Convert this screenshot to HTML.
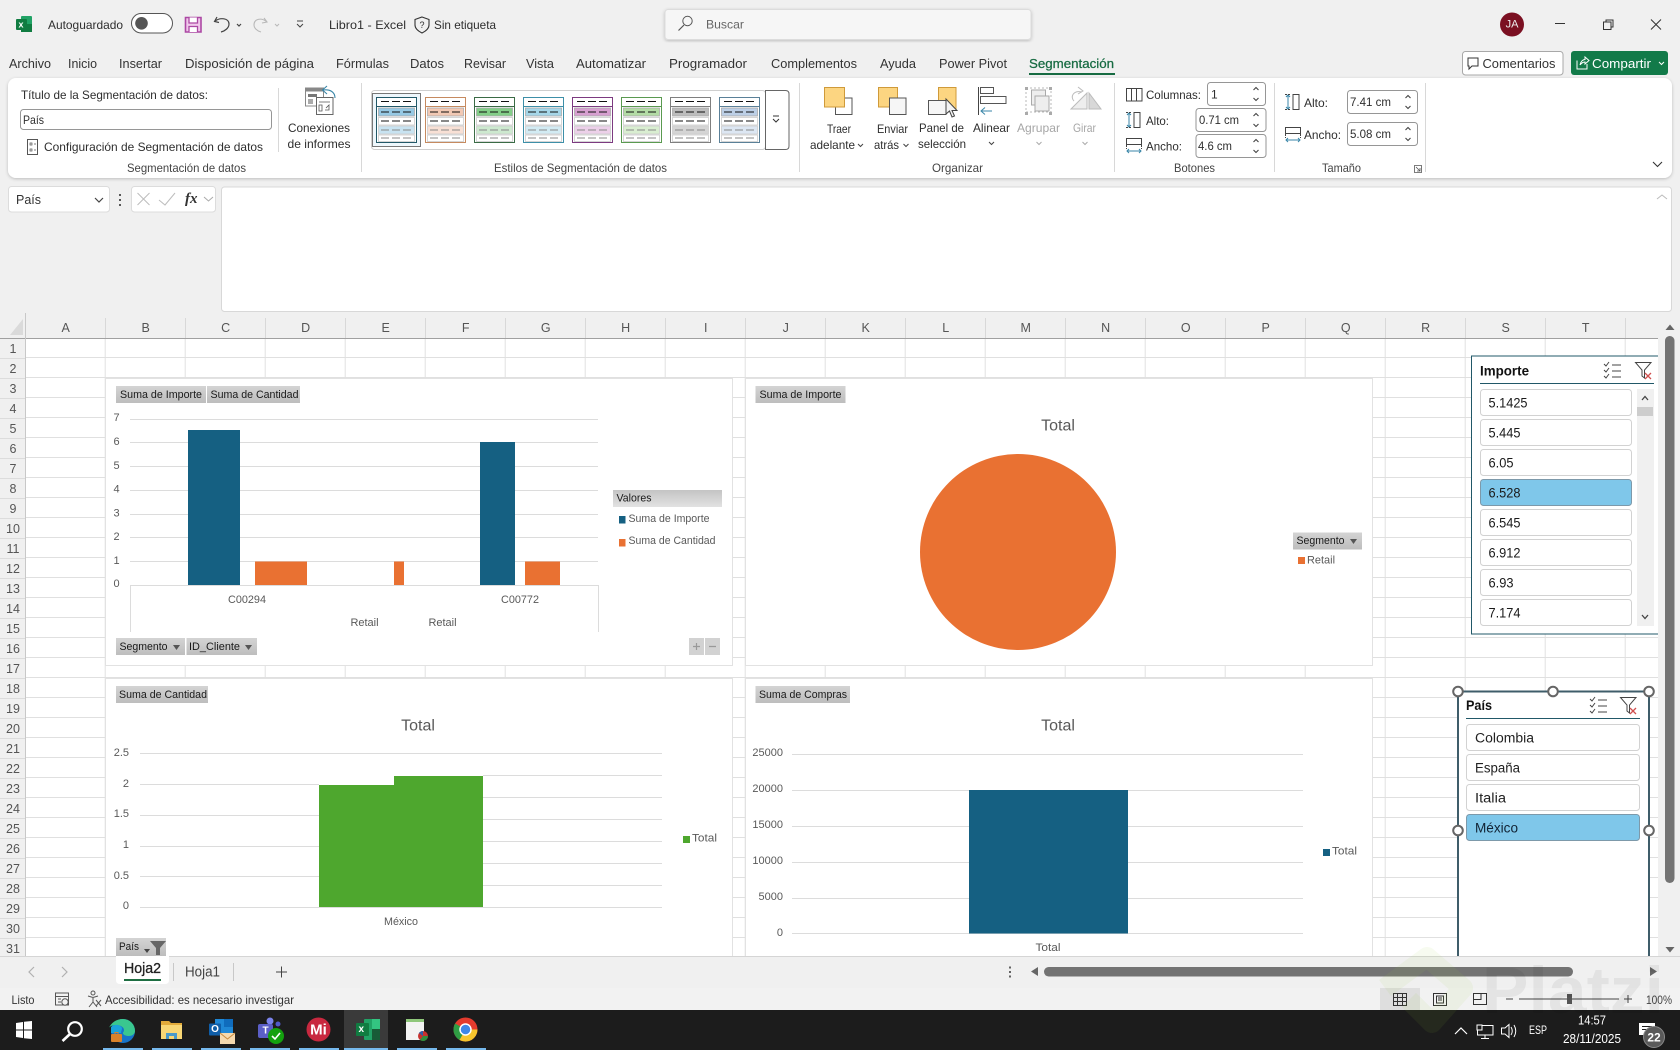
<!DOCTYPE html>
<html lang="es">
<head>
<meta charset="utf-8">
<title>Libro1 - Excel</title>
<style>
html,body{margin:0;padding:0;background:#f0f0f0;width:1680px;height:1050px;overflow:hidden}
svg{display:block}
text{font-family:"Liberation Sans",sans-serif;font-size:12px;fill:#2e2e2e;dominant-baseline:central}
.t{font-size:13px;fill:#333}
.h{font-size:12.5px;fill:#555;text-anchor:middle}
.lb{font-size:12px;fill:#444}
.dis{fill:#a6a6a6}
.c{text-anchor:middle}
.ch{font-size:11px;fill:#595959}
.fb{font-size:11px;fill:#1a1a1a}
.ti{font-size:16px;fill:#595959;text-anchor:middle}
.s{font-size:13.5px;fill:#1a1a1a}
.st{font-size:14px;font-weight:bold;fill:#111}
.i{fill:none;stroke:#444;stroke-width:1}
.d{fill:none;stroke:#444;stroke-width:1.2}
.ta{fill:#fff;stroke:var(--a)}
.tb{fill:var(--b);stroke:#aaa;stroke-width:.8}
.tc{fill:var(--c);stroke:#ccc;stroke-width:.8}
.tw{fill:#fff;stroke:#ccc;stroke-width:.8}
.dk{stroke:#111;stroke-dasharray:8 3;stroke-width:1;fill:none}
.dg{stroke:#888;stroke-dasharray:8 3;stroke-width:1;fill:none}
.gl{stroke:#dcdcdc;stroke-width:1}
.it{fill:#fff;stroke:#d2d2d2}
.sel{fill:#7fc7ea;stroke:#7d99aa}
.inp{fill:#fff;stroke:#969696}
</style>
</head>
<body>
<svg xmlns="http://www.w3.org/2000/svg" width="1680" height="1050" viewBox="0 0 1680 1050">
<defs>
<filter id="sh" x="-2%" y="-10%" width="104%" height="120%"><feDropShadow dx="0" dy="1" stdDeviation="1.5" flood-color="#000" flood-opacity=".22"/></filter>
<pattern id="grid" x="25.7" y="338" width="80" height="20" patternUnits="userSpaceOnUse">
<rect width="80" height="20" fill="#fff"/><path d="M79.5 0V20M0 19.5H80" stroke="#e0e0e0" fill="none"/>
</pattern>
<linearGradient id="btn" x1="0" y1="0" x2="0" y2="1"><stop offset="0" stop-color="#d4d4d4"/><stop offset="1" stop-color="#bdbdbd"/></linearGradient>
<linearGradient id="btn2" x1="0" y1="0" x2="0" y2="1"><stop offset="0" stop-color="#c4c4c4"/><stop offset="1" stop-color="#e2e2e2"/></linearGradient>
<g id="th">
<rect class="ta" x=".5" y=".5" width="40" height="45"/>
<path d="M0 9.500H41" style="stroke:var(--a)"/>
<path class="dk" d="M5 4.500H36"/>
<rect class="tb" x="2.500" y="11" width="36" height="8"/><path class="dk" d="M5 15H36"/>
<rect class="tw" x="2.500" y="20.500" width="36" height="7.500"/><path class="dk" d="M5 24H36"/>
<rect class="tc" x="2.500" y="29" width="36" height="8"/><path class="dg" d="M5 33H36"/>
<rect class="tw" x="2.500" y="38" width="36" height="6.500"/><path class="dg" d="M5 41H36"/>
</g>
<g id="spin"><path d="M-2.500 -4L0 -6.500L2.500 -4M-2.500 4L0 6.500L2.500 4" fill="none" stroke="#444" stroke-width="1.100"/></g>
<g id="multi"><path d="M0 2l2 2 3-4M0 8l2 2 3-4M0 14l2 2 3-4" fill="none" stroke="#444"/><path d="M8 3H17M8 9H17M8 15H17" stroke="#444"/></g>
<g id="fx"><path d="M.5 .5H16L9.500 8V16L7 14V8Z" fill="#fff" stroke="#444"/><path d="M10 11l6 6M16 11l-6 6" stroke="#d0504f" stroke-width="1.300"/></g>
<g id="alt"><rect x="8" y=".5" width="6" height="15" fill="#fff" stroke="#444"/><path d="M3 1V15M1 3L3 1L5 3M1 13L3 15L5 13" fill="none" stroke="#3a86a8"/><path d="M0 .5H6M0 15.500H6" stroke="#444" stroke-dasharray="2 1"/></g>
<g id="anc"><rect x=".5" y=".5" width="15" height="6" fill="#fff" stroke="#444"/><path d="M1 13H15M3 11L1 13L3 15M13 11L15 13L13 15" fill="none" stroke="#3a86a8"/><path d="M.5 7V11M15.500 7V11" stroke="#444" stroke-dasharray="2 1"/></g>
</defs>

<rect width="1680" height="1050" fill="#f0f0f0"/>

<!-- title bar -->
<rect x="21" y="16" width="11" height="16" rx="1" fill="#21a366"/><rect x="21" y="24" width="11" height="8" fill="#107c41"/><rect x="16" y="19" width="11" height="11" rx="1" fill="#107c41"/>
<text x="18.500" y="24.500" style="font-size:9px;font-weight:bold;fill:#fff">x</text>
<text x="48" y="25" textLength="75" lengthAdjust="spacingAndGlyphs">Autoguardado</text>
<rect x="131.500" y="13.500" width="41" height="19.500" rx="9.700" fill="#fff" stroke="#555"/><circle cx="141.500" cy="23.300" r="6.300" fill="#555"/>
<path d="M185.500 17.500H201V32H185.500Z" fill="#f0c8eb" stroke="#ac48a4" stroke-width="1.600"/><path d="M189 17.500V23H197.500V17.500" fill="#fff" stroke="#ac48a4" stroke-width="1.300"/><path d="M189 32V26.500H197.500V32" fill="#fff" stroke="#ac48a4" stroke-width="1.300"/>
<path d="M217 17L214.500 21.500L219 22.500M214.500 21.500C220 17 229 18 229 24C229 28 225 31 221 32" fill="none" stroke="#444" stroke-width="1.200"/>
<path class="d" d="M237 24L239 26L241 24"/>
<path d="M264 18L267 22L262 23M267 22C261 17 254 19 254 25C254 28 257 31 261 32" fill="none" stroke="#b8b8b8" stroke-width="1.100"/>
<path d="M275 24L277 26L279 24" fill="none" stroke="#b8b8b8"/>
<path d="M297 21H303M297 24L300 27L303 24" fill="none" stroke="#444"/>
<text x="329" y="25" textLength="77" lengthAdjust="spacingAndGlyphs">Libro1  -  Excel</text>
<path d="M422 17L429 19.500V25C429 29 425 31.500 422 33C419 31.500 415 29 415 25V19.500Z" fill="none" stroke="#333" stroke-width="1.100"/>
<text x="419.500" y="25" style="font-size:9px">?</text>
<text x="434" y="25" textLength="62" lengthAdjust="spacingAndGlyphs">Sin etiqueta</text>
<rect x="665" y="9.500" width="366" height="30" rx="3" fill="#f6f6f6" stroke="#dcdcdc" filter="url(#sh)"/>
<circle cx="687.500" cy="21" r="4.700" fill="none" stroke="#555"/><path d="M684 25L678.500 30.500" stroke="#555" stroke-width="1.200"/>
<text x="706" y="24.500" textLength="38" lengthAdjust="spacingAndGlyphs" style="fill:#666">Buscar</text>
<circle cx="1512" cy="24.500" r="12" fill="#7b1022"/><text x="1512" y="24.500" class="c" style="font-size:11px;fill:#eee">JA</text>
<path d="M1555 23.500H1565" stroke="#333"/>
<path d="M1603.500 22H1611V29.500H1603.500ZM1606 22V20H1613V27H1611" fill="none" stroke="#333"/>
<path d="M1651 19.500L1661 29.500M1661 19.500L1651 29.500" stroke="#333"/>

<!-- tabs -->
<text class="t" x="9" y="63.500" textLength="42" lengthAdjust="spacingAndGlyphs">Archivo</text>
<text class="t" x="68" y="63.500" textLength="29" lengthAdjust="spacingAndGlyphs">Inicio</text>
<text class="t" x="119" y="63.500" textLength="43" lengthAdjust="spacingAndGlyphs">Insertar</text>
<text class="t" x="185" y="63.500" textLength="129" lengthAdjust="spacingAndGlyphs">Disposición de página</text>
<text class="t" x="336" y="63.500" textLength="53" lengthAdjust="spacingAndGlyphs">Fórmulas</text>
<text class="t" x="410" y="63.500" textLength="34" lengthAdjust="spacingAndGlyphs">Datos</text>
<text class="t" x="464" y="63.500" textLength="42" lengthAdjust="spacingAndGlyphs">Revisar</text>
<text class="t" x="526" y="63.500" textLength="28" lengthAdjust="spacingAndGlyphs">Vista</text>
<text class="t" x="576" y="63.500" textLength="70" lengthAdjust="spacingAndGlyphs">Automatizar</text>
<text class="t" x="669" y="63.500" textLength="78" lengthAdjust="spacingAndGlyphs">Programador</text>
<text class="t" x="771" y="63.500" textLength="86" lengthAdjust="spacingAndGlyphs">Complementos</text>
<text class="t" x="880" y="63.500" textLength="36" lengthAdjust="spacingAndGlyphs">Ayuda</text>
<text class="t" x="939" y="63.500" textLength="68" lengthAdjust="spacingAndGlyphs">Power Pivot</text>
<text class="t" x="1029" y="63.500" textLength="85" lengthAdjust="spacingAndGlyphs" style="fill:#176b42;stroke:#176b42;stroke-width:.25">Segmentación</text>
<rect x="1029" y="73" width="86" height="2" fill="#176b42"/>
<rect x="1462.500" y="51.500" width="100.500" height="23.500" rx="3" fill="#fff" stroke="#a8a8a8"/>
<path d="M1468 58H1478V66H1472L1469 69V66H1468Z" fill="none" stroke="#333"/>
<text class="t" x="1482.500" y="63.500" textLength="73" lengthAdjust="spacingAndGlyphs">Comentarios</text>
<rect x="1571" y="51" width="97" height="24" rx="3" fill="#127a49"/>
<path d="M1577 60.500V69H1587V64M1580 65C1580.500 61.500 1583 59.500 1585 59.500V57L1589 60.500L1585 64V62C1583 62 1581.500 63 1580 65" fill="none" stroke="#fff"/>
<text class="t" x="1592" y="63.500" textLength="59" lengthAdjust="spacingAndGlyphs" style="fill:#fff">Compartir</text>
<path d="M1659 62L1661.500 64.500L1664 62" fill="none" stroke="#fff"/>

<!-- ribbon -->
<rect x="8" y="78" width="1664" height="100" rx="8" fill="#fff" filter="url(#sh)"/>
<path d="M278.500 88V152M361.500 83V172M799.500 83V172M1114.500 83V172M1274.500 83V172M1425.500 83V172" stroke="#d8d8d8"/>
<text x="21" y="95" textLength="187" lengthAdjust="spacingAndGlyphs">Título de la Segmentación de datos:</text>
<rect class="inp" x="20.500" y="109.500" width="251" height="20" rx="3"/>
<text x="23" y="120" textLength="21" lengthAdjust="spacingAndGlyphs">País</text>
<rect x="27.500" y="139.500" width="10" height="15" fill="#fff" stroke="#555"/><path d="M30 143h2v2h-2zM34 144h2M30 149h2v2h-2zM34 150h2" fill="none" stroke="#555" stroke-width=".7"/>
<text x="44" y="147" textLength="219" lengthAdjust="spacingAndGlyphs">Configuración de Segmentación de datos</text>
<text class="lb" x="127" y="168" textLength="119" lengthAdjust="spacingAndGlyphs">Segmentación de datos</text>
<!-- conexiones -->
<rect x="305.500" y="88" width="18" height="18" fill="#fff" stroke="#888"/><rect x="306" y="88.500" width="17" height="3" fill="#888"/><rect x="308" y="94" width="9" height="3" fill="#777"/><rect x="308" y="99" width="5" height="5" fill="#aaa"/>
<rect x="316.500" y="97.500" width="16.500" height="17" fill="#fff" stroke="#666"/><path d="M319 102H330M319 105H322V111H319ZM326 108L329 105V110H325" fill="none" stroke="#555" stroke-width=".8"/>
<path d="M327 86L322.500 90L327 94M323 90C330 89 335 92 335 98" fill="none" stroke="#3a86a8" stroke-width="1.100"/>
<text x="288" y="128" textLength="62" lengthAdjust="spacingAndGlyphs">Conexiones</text>
<text x="287.500" y="144" textLength="63" lengthAdjust="spacingAndGlyphs">de informes</text>
<!-- gallery -->
<rect x="371.500" y="90.500" width="394" height="59" rx="3" fill="#fff" stroke="#cfcfcf"/>
<rect x="372.500" y="93.500" width="48" height="53" fill="#eef7fc" stroke="#777"/>
<use href="#th" x="376" y="97" style="--a:#215868;--b:#96c9e4;--c:#c8e3f1"/>
<use href="#th" x="425" y="97" style="--a:#c68a5f;--b:#f2c9b4;--c:#f8e0d5"/>
<use href="#th" x="474" y="97" style="--a:#3a6b45;--b:#83cf88;--c:#cde9cf"/>
<use href="#th" x="523" y="97" style="--a:#3d8fa8;--b:#a5d6e8;--c:#d2ebf3"/>
<use href="#th" x="572" y="97" style="--a:#7c3a80;--b:#d79fd0;--c:#ecd0e9"/>
<use href="#th" x="621" y="97" style="--a:#5a9a50;--b:#b3dca5;--c:#d9eed1"/>
<use href="#th" x="670" y="97" style="--a:#7f7f7f;--b:#bcbcbc;--c:#d5d5d5"/>
<use href="#th" x="719" y="97" style="--a:#5a8098;--b:#bccfe6;--c:#dde7f3"/>
<path d="M765.500 90.500H785.500Q789 90.500 789 94V146Q789 149.500 785.500 149.500H765.500Z" fill="#fff" stroke="#666"/>
<path d="M773 116H779M773 119L776 122L779 119" fill="none" stroke="#333"/>
<text class="lb" x="494" y="168" textLength="173" lengthAdjust="spacingAndGlyphs">Estilos de Segmentación de datos</text>
<!-- organizar -->
<rect x="835.500" y="98" width="16.500" height="16.500" fill="#fff" stroke="#555"/><rect x="824.500" y="87.500" width="20" height="19.500" fill="#fcd581" stroke="#cf9a3a"/>
<text x="827" y="129" textLength="24" lengthAdjust="spacingAndGlyphs">Traer</text><text x="810" y="145" textLength="45" lengthAdjust="spacingAndGlyphs">adelante</text><path class="i" d="M858 144L860.500 146.500L863 144"/>
<rect x="878.500" y="87.500" width="19" height="19.500" fill="#fcd581" stroke="#cf9a3a"/>
<rect x="889.500" y="98" width="16.500" height="16.500" fill="#f6f6f6" stroke="#555"/>
<text x="877" y="129" textLength="31" lengthAdjust="spacingAndGlyphs">Enviar</text><text x="874" y="145" textLength="25" lengthAdjust="spacingAndGlyphs">atrás</text><path class="i" d="M903.500 144L906 146.500L908.500 144"/>
<rect x="938.500" y="87.500" width="17.500" height="23" fill="#fcd581" stroke="#cf9a3a"/>
<rect x="928.500" y="100.500" width="17.500" height="14" fill="#f6f6f6" stroke="#555"/>
<path d="M946 99V114L949.500 111L952 117L954.500 116L952 110.500H957Z" fill="#f2f2f2" stroke="#444"/>
<text x="919" y="128" textLength="45" lengthAdjust="spacingAndGlyphs">Panel de</text><text x="918" y="144" textLength="48" lengthAdjust="spacingAndGlyphs">selección</text>
<path d="M978.500 87V115" stroke="#444"/><rect x="980.500" y="87.500" width="13" height="6" fill="#fff" stroke="#555"/><rect x="980.500" y="96.500" width="25.500" height="7" fill="#fff" stroke="#555"/>
<path d="M985 107.500L981 111L985 114.500M981 111H992" fill="none" stroke="#3a86a8"/>
<text x="973" y="128" textLength="37" lengthAdjust="spacingAndGlyphs">Alinear</text><path class="i" d="M989 142L991.500 144.500L994 142"/>
<rect x="1026" y="88" width="25" height="24" fill="none" stroke="#b8b8b8" stroke-dasharray="2 2"/><rect x="1031.500" y="90" width="14" height="15" fill="#eee" stroke="#aaa"/><rect x="1035" y="96" width="14" height="15" fill="#eee" stroke="#aaa"/>
<path d="M1025 87h3v3h-3zM1049 87h3v3h-3zM1025 112h3v3h-3zM1049 112h3v3h-3z" fill="#aaa"/>
<text class="dis" x="1017" y="128" textLength="43" lengthAdjust="spacingAndGlyphs">Agrupar</text><path d="M1036.500 142L1039 144.500L1041.500 142" fill="none" stroke="#aaa"/>
<path d="M1071 109L1087 109V93Z" fill="#eee" stroke="#bbb"/><path d="M1089 93V109H1101Z" fill="#d8d8d8" stroke="#bbb"/><path d="M1082 92C1073 90 1070 97 1074 101M1078 87L1083 91L1078 94" fill="none" stroke="#bbb"/>
<text class="dis" x="1073" y="128" textLength="23" lengthAdjust="spacingAndGlyphs">Girar</text><path d="M1082.500 142L1085 144.500L1087.500 142" fill="none" stroke="#aaa"/>
<text class="lb" x="932" y="168" textLength="51" lengthAdjust="spacingAndGlyphs">Organizar</text>
<!-- botones -->
<rect x="1126.500" y="88.500" width="15.500" height="12.500" fill="#fff" stroke="#444"/><path d="M1131.500 89V101M1136.500 89V101" stroke="#444"/>
<text x="1146" y="95" textLength="55" lengthAdjust="spacingAndGlyphs">Columnas:</text>
<rect class="inp" x="1207.500" y="82.500" width="58" height="23" rx="3"/><text x="1211" y="94.500">1</text><use href="#spin" x="1256" y="94"/>
<use href="#alt" x="1126" y="112"/><text x="1146" y="121" textLength="23" lengthAdjust="spacingAndGlyphs">Alto:</text>
<rect class="inp" x="1196" y="108.500" width="70" height="23" rx="3"/><text x="1199" y="120" textLength="40" lengthAdjust="spacingAndGlyphs">0.71 cm</text><use href="#spin" x="1256" y="120"/>
<use href="#anc" x="1126" y="138"/><text x="1146" y="146.500" textLength="36" lengthAdjust="spacingAndGlyphs">Ancho:</text>
<rect class="inp" x="1196" y="134.500" width="70" height="23" rx="3"/><text x="1198" y="146" textLength="34" lengthAdjust="spacingAndGlyphs">4.6 cm</text><use href="#spin" x="1256" y="146"/>
<text class="lb" x="1174" y="168" textLength="41" lengthAdjust="spacingAndGlyphs">Botones</text>
<!-- tamano -->
<use href="#alt" x="1285" y="94"/><text x="1304" y="103" textLength="24" lengthAdjust="spacingAndGlyphs">Alto:</text>
<rect class="inp" x="1347.500" y="90.500" width="70" height="23" rx="3"/><text x="1350" y="102" textLength="41" lengthAdjust="spacingAndGlyphs">7.41 cm</text><use href="#spin" x="1408" y="102"/>
<use href="#anc" x="1285" y="127"/><text x="1304" y="135" textLength="37" lengthAdjust="spacingAndGlyphs">Ancho:</text>
<rect class="inp" x="1347.500" y="122.500" width="70" height="23" rx="3"/><text x="1350" y="134" textLength="41" lengthAdjust="spacingAndGlyphs">5.08 cm</text><use href="#spin" x="1408" y="134"/>
<text class="lb" x="1322" y="168" textLength="39" lengthAdjust="spacingAndGlyphs">Tamaño</text>
<path d="M1414.500 165.500H1421.500V172.500H1414.500ZM1416 167L1420 171M1420 168V171H1417" fill="none" stroke="#555" stroke-width=".8"/>
<path d="M1653 162L1657.500 166.500L1662 162" fill="none" stroke="#333" stroke-width="1.100"/>

<!-- formula bar -->
<rect x="8.500" y="186.500" width="101" height="25.500" rx="3" fill="#fff" stroke="#dcdcdc"/>
<text x="16" y="199.500" class="t" textLength="25" lengthAdjust="spacingAndGlyphs">País</text><path d="M95 198L99 202L103 198" fill="none" stroke="#444" stroke-width="1.200"/>
<path d="M120 194v2M120 199v2M120 204v2" stroke="#333" stroke-width="1.600"/>
<rect x="131.500" y="186.500" width="84" height="25.500" rx="3" fill="#fff" stroke="#dcdcdc"/>
<path d="M137.500 193L149.500 205M149.500 193L137.500 205" stroke="#bdbdbd"/><path d="M159 200L165 205L175 193" fill="none" stroke="#bdbdbd"/>
<text x="185" y="199" style="font-family:'Liberation Serif',serif;font-style:italic;font-weight:bold;font-size:15px;fill:#333">fx</text>
<path d="M204 197L208.500 201L213 197" fill="none" stroke="#aaa"/>
<rect x="221.500" y="187" width="1450" height="124.500" rx="3" fill="#fff" stroke="#d8d8d8"/>
<path d="M1657 199L1662 195L1667 199" fill="none" stroke="#bbb"/>

<!-- sheet -->
<rect x="0" y="313" width="1658" height="25.500" fill="#f0f0f0"/>
<rect x="26" y="338.500" width="1632" height="618" fill="url(#grid)"/>
<path d="M10 335L23 335L23 319Z" fill="#dadada"/>
<path d="M0 338.500H1658" stroke="#a0a0a0"/>
<path d="M25.500 313V956" stroke="#c8c8c8"/>
<path d="M105.500 318V338M185.500 318V338M265.500 318V338M345.500 318V338M425.500 318V338M505.500 318V338M585.500 318V338M665.500 318V338M745.500 318V338M825.500 318V338M905.500 318V338M985.500 318V338M1065.500 318V338M1145.500 318V338M1225.500 318V338M1305.500 318V338M1385.500 318V338M1465.500 318V338M1545.500 318V338M1625.500 318V338" stroke="#d8d8d8"/>
<path d="M0 358.500H25M0 378.500H25M0 398.500H25M0 418.500H25M0 438.500H25M0 458.500H25M0 478.500H25M0 498.500H25M0 518.500H25M0 538.500H25M0 558.500H25M0 578.500H25M0 598.500H25M0 618.500H25M0 638.500H25M0 658.500H25M0 678.500H25M0 698.500H25M0 718.500H25M0 738.500H25M0 758.500H25M0 778.500H25M0 798.500H25M0 818.500H25M0 838.500H25M0 858.500H25M0 878.500H25M0 898.500H25M0 918.500H25M0 938.500H25" stroke="#dcdcdc"/>
<text class="h" x="65.700" y="328">A</text><text class="h" x="145.700" y="328">B</text><text class="h" x="225.700" y="328">C</text><text class="h" x="305.700" y="328">D</text><text class="h" x="385.700" y="328">E</text><text class="h" x="465.700" y="328">F</text><text class="h" x="545.700" y="328">G</text><text class="h" x="625.700" y="328">H</text><text class="h" x="705.700" y="328">I</text><text class="h" x="785.700" y="328">J</text><text class="h" x="865.700" y="328">K</text><text class="h" x="945.700" y="328">L</text><text class="h" x="1025.700" y="328">M</text><text class="h" x="1105.700" y="328">N</text><text class="h" x="1185.700" y="328">O</text><text class="h" x="1265.700" y="328">P</text><text class="h" x="1345.700" y="328">Q</text><text class="h" x="1425.700" y="328">R</text><text class="h" x="1505.700" y="328">S</text><text class="h" x="1585.700" y="328">T</text>
<text class="h" x="13" y="349">1</text><text class="h" x="13" y="369">2</text><text class="h" x="13" y="389">3</text><text class="h" x="13" y="409">4</text><text class="h" x="13" y="429">5</text><text class="h" x="13" y="449">6</text><text class="h" x="13" y="469">7</text><text class="h" x="13" y="489">8</text><text class="h" x="13" y="509">9</text><text class="h" x="13" y="529">10</text><text class="h" x="13" y="549">11</text><text class="h" x="13" y="569">12</text><text class="h" x="13" y="589">13</text><text class="h" x="13" y="609">14</text><text class="h" x="13" y="629">15</text><text class="h" x="13" y="649">16</text><text class="h" x="13" y="669">17</text><text class="h" x="13" y="689">18</text><text class="h" x="13" y="709">19</text><text class="h" x="13" y="729">20</text><text class="h" x="13" y="749">21</text><text class="h" x="13" y="769">22</text><text class="h" x="13" y="789">23</text><text class="h" x="13" y="809">24</text><text class="h" x="13" y="829">25</text><text class="h" x="13" y="849">26</text><text class="h" x="13" y="869">27</text><text class="h" x="13" y="889">28</text><text class="h" x="13" y="909">29</text><text class="h" x="13" y="929">30</text><text class="h" x="13" y="949">31</text>

<!-- chart 1 -->
<rect x="105.500" y="378.500" width="627" height="287" fill="#fff" stroke="#e2e2e2"/>
<rect x="116" y="386" width="90" height="17" fill="url(#btn)"/><text class="fb" x="120" y="395" textLength="82" lengthAdjust="spacingAndGlyphs">Suma de Importe</text>
<rect x="207" y="386" width="93" height="17" fill="url(#btn)"/><text class="fb" x="210.500" y="395" textLength="88" lengthAdjust="spacingAndGlyphs">Suma de Cantidad</text>
<path class="gl" d="M130 419.500H598M130 442.500H598M130 466.500H598M130 490.500H598M130 514.500H598M130 537.500H598M130 561.500H598M130 585.500H598M130.500 585V632M598.500 585V632"/>
<text class="ch c" x="116.500" y="418">7</text><text class="ch c" x="116.500" y="442">6</text><text class="ch c" x="116.500" y="466">5</text><text class="ch c" x="116.500" y="489.500">4</text><text class="ch c" x="116.500" y="513.500">3</text><text class="ch c" x="116.500" y="537">2</text><text class="ch c" x="116.500" y="561">1</text><text class="ch c" x="116.500" y="584">0</text>
<rect x="188" y="430" width="52" height="155" fill="#156082"/>
<rect x="255" y="561.500" width="52" height="23.500" fill="#e97132"/>
<rect x="394" y="561.500" width="10" height="23.500" fill="#e97132"/>
<rect x="480" y="442" width="35" height="143" fill="#156082"/>
<rect x="525" y="561.500" width="35" height="23.500" fill="#e97132"/>
<text class="ch" x="228" y="600" textLength="38" lengthAdjust="spacingAndGlyphs">C00294</text><text class="ch" x="501" y="600" textLength="38" lengthAdjust="spacingAndGlyphs">C00772</text>
<text class="ch c" x="364.500" y="623">Retail</text><text class="ch c" x="442.500" y="623">Retail</text>
<rect x="116" y="638" width="69" height="17" fill="url(#btn)"/><text class="fb" x="119.500" y="647" textLength="48" lengthAdjust="spacingAndGlyphs">Segmento</text><path d="M173 645H180L176.500 650Z" fill="#555"/>
<rect x="186.500" y="638" width="70.500" height="17" fill="url(#btn)"/><text class="fb" x="189" y="647" textLength="51" lengthAdjust="spacingAndGlyphs">ID_Cliente</text><path d="M245 645H252L248.500 650Z" fill="#555"/>
<rect x="689" y="638" width="15" height="17" fill="#d2d2d2"/><rect x="705" y="638" width="15" height="17" fill="#d2d2d2"/>
<path d="M693 646.500H700M696.500 643V650M709 646.500H716" stroke="#999" stroke-width="1.200"/>
<rect x="613" y="490" width="109" height="17" fill="url(#btn2)"/><text class="fb" x="616.500" y="498.500" textLength="35" lengthAdjust="spacingAndGlyphs">Valores</text>
<rect x="619" y="516" width="6.500" height="7.500" fill="#156082"/><text class="ch" x="628.500" y="519" textLength="81" lengthAdjust="spacingAndGlyphs">Suma de Importe</text>
<rect x="619" y="539" width="6.500" height="7.500" fill="#e97132"/><text class="ch" x="628.500" y="541" textLength="87" lengthAdjust="spacingAndGlyphs">Suma de Cantidad</text>

<!-- chart 2 -->
<rect x="745.500" y="378.500" width="627" height="287" fill="#fff" stroke="#e2e2e2"/>
<rect x="755.500" y="386" width="90" height="17" fill="url(#btn)"/><text class="fb" x="759.500" y="395" textLength="82" lengthAdjust="spacingAndGlyphs">Suma de Importe</text>
<text class="ti" x="1058" y="426">Total</text>
<circle cx="1018" cy="552" r="98" fill="#e97132"/>
<rect x="1293" y="532.500" width="69" height="17" fill="url(#btn)"/><text class="fb" x="1296.500" y="541" textLength="48" lengthAdjust="spacingAndGlyphs">Segmento</text><path d="M1350 539H1357L1353.500 544Z" fill="#555"/>
<rect x="1298" y="557" width="7" height="7" fill="#e97132"/><text class="ch" x="1307" y="560.500" textLength="28" lengthAdjust="spacingAndGlyphs">Retail</text>

<!-- chart 3 -->
<rect x="105.500" y="678.500" width="627" height="278" fill="#fff" stroke="#e2e2e2"/>
<rect x="116" y="686" width="92" height="17" fill="url(#btn)"/><text class="fb" x="119" y="695" textLength="88" lengthAdjust="spacingAndGlyphs">Suma de Cantidad</text>
<text class="ti" x="418" y="726">Total</text>
<path class="gl" d="M140 753.500H662M140 784.500H319M140 815.500H319M140 846.500H319M140 876.500H319M140 907.500H662M483 775.500H662M483 797.500H662M483 819.500H662M483 841.500H662M483 863.500H662M483 885.500H662"/>
<text class="ch" x="129" y="753" text-anchor="end">2.5</text><text class="ch" x="129" y="784" text-anchor="end">2</text><text class="ch" x="129" y="814" text-anchor="end">1.5</text><text class="ch" x="129" y="845" text-anchor="end">1</text><text class="ch" x="129" y="876" text-anchor="end">0.5</text><text class="ch" x="129" y="906" text-anchor="end">0</text>
<path d="M319 785H394V776H483V907H319Z" fill="#4ea72e"/>
<text class="ch" x="384" y="922" textLength="34" lengthAdjust="spacingAndGlyphs">México</text>
<rect x="683" y="836" width="7" height="7" fill="#4ea72e"/><text class="ch" x="692" y="838.500" textLength="25" lengthAdjust="spacingAndGlyphs">Total</text>
<rect x="116" y="938" width="50" height="18" fill="url(#btn)"/><text class="fb" x="119" y="947" textLength="20" lengthAdjust="spacingAndGlyphs">País</text>
<path d="M144 949H150L147 953Z" fill="#444"/><path d="M150 941H166L160 948V955H156V948Z" fill="#666"/>

<!-- chart 4 -->
<rect x="745.500" y="678.500" width="627" height="278" fill="#fff" stroke="#e2e2e2"/>
<rect x="755.500" y="686" width="94.500" height="17" fill="url(#btn)"/><text class="fb" x="759" y="695" textLength="88" lengthAdjust="spacingAndGlyphs">Suma de Compras</text>
<text class="ti" x="1058" y="726">Total</text>
<path class="gl" d="M792 754.500H1303M792 790.500H1303M792 826.500H1303M792 862.500H1303M792 898.500H1303M792 933.500H1303"/>
<text class="ch" x="783" y="753" text-anchor="end">25000</text><text class="ch" x="783" y="789" text-anchor="end">20000</text><text class="ch" x="783" y="825" text-anchor="end">15000</text><text class="ch" x="783" y="861" text-anchor="end">10000</text><text class="ch" x="783" y="897" text-anchor="end">5000</text><text class="ch" x="783" y="933" text-anchor="end">0</text>
<rect x="969" y="790" width="159" height="143.500" fill="#156082"/>
<text class="ch" x="1035.500" y="948" textLength="25" lengthAdjust="spacingAndGlyphs">Total</text>
<rect x="1323" y="849" width="7" height="7" fill="#156082"/><text class="ch" x="1332" y="851.500" textLength="25" lengthAdjust="spacingAndGlyphs">Total</text>

<!-- slicer importe -->
<rect x="1471" y="356" width="187" height="278" fill="#fff"/>
<path d="M1658 356H1471.500V634H1658" fill="none" stroke="#215868"/>
<text class="st" x="1480" y="370.500" textLength="49" lengthAdjust="spacingAndGlyphs">Importe</text>
<path d="M1480 383.500H1654" stroke="#215868"/>
<use href="#multi" x="1604" y="362"/><use href="#fx" x="1635" y="362"/>
<rect class="it" x="1480.500" y="389.500" width="151" height="26" rx="3"/><text class="s" x="1488.500" y="403" textLength="39" lengthAdjust="spacingAndGlyphs">5.1425</text>
<rect class="it" x="1480.500" y="419.500" width="151" height="26" rx="3"/><text class="s" x="1488.500" y="433" textLength="32" lengthAdjust="spacingAndGlyphs">5.445</text>
<rect class="it" x="1480.500" y="449.500" width="151" height="26" rx="3"/><text class="s" x="1488.500" y="463" textLength="25" lengthAdjust="spacingAndGlyphs">6.05</text>
<rect class="sel" x="1480.500" y="479.500" width="151" height="26" rx="3"/><text class="s" x="1488.500" y="493" textLength="32" lengthAdjust="spacingAndGlyphs">6.528</text>
<rect class="it" x="1480.500" y="509.500" width="151" height="26" rx="3"/><text class="s" x="1488.500" y="523" textLength="32" lengthAdjust="spacingAndGlyphs">6.545</text>
<rect class="it" x="1480.500" y="539.500" width="151" height="26" rx="3"/><text class="s" x="1488.500" y="553" textLength="32" lengthAdjust="spacingAndGlyphs">6.912</text>
<rect class="it" x="1480.500" y="569.500" width="151" height="26" rx="3"/><text class="s" x="1488.500" y="583" textLength="25" lengthAdjust="spacingAndGlyphs">6.93</text>
<rect class="it" x="1480.500" y="599.500" width="151" height="26" rx="3"/><text class="s" x="1488.500" y="613" textLength="32" lengthAdjust="spacingAndGlyphs">7.174</text>
<rect x="1637" y="389" width="17" height="237" fill="#f0f0f0"/><rect x="1637" y="407" width="16" height="9" fill="#cdcdcd"/>
<path d="M1642 400L1645 396.500L1648 400M1642 615L1645 618.500L1648 615" fill="none" stroke="#444" stroke-width="1.300"/>

<!-- slicer pais -->
<rect x="1458" y="691.500" width="191" height="270" fill="#fff" stroke="#3f5d6a" stroke-width="2"/>
<text class="st" x="1466" y="705" textLength="26" lengthAdjust="spacingAndGlyphs">País</text>
<path d="M1466 718.500H1640" stroke="#215868"/>
<use href="#multi" x="1590" y="697"/><use href="#fx" x="1620" y="697"/>
<rect class="it" x="1466.500" y="724.500" width="173" height="26" rx="3"/><text class="s" x="1475" y="738" textLength="59" lengthAdjust="spacingAndGlyphs" style="fill:#222">Colombia</text>
<rect class="it" x="1466.500" y="754.500" width="173" height="26" rx="3"/><text class="s" x="1475" y="768" textLength="45" lengthAdjust="spacingAndGlyphs" style="fill:#222">España</text>
<rect class="it" x="1466.500" y="784.500" width="173" height="26" rx="3"/><text class="s" x="1475" y="798" textLength="31" lengthAdjust="spacingAndGlyphs" style="fill:#222">Italia</text>
<rect class="sel" x="1466.500" y="814.500" width="173" height="26" rx="3"/><text class="s" x="1475" y="828" textLength="43" lengthAdjust="spacingAndGlyphs" style="fill:#123">México</text>
<g fill="#fff" stroke="#666" stroke-width="2"><circle cx="1458" cy="691.500" r="4.800"/><circle cx="1553" cy="691.500" r="4.800"/><circle cx="1649" cy="691.500" r="4.800"/><circle cx="1458" cy="830.500" r="4.800"/><circle cx="1649" cy="830.500" r="4.800"/></g>

<!-- vertical scrollbar -->
<rect x="1658" y="313" width="22" height="643" fill="#f0f0f0"/>
<path d="M1665.500 330L1670 324.500L1674.500 330Z" fill="#666"/>
<rect x="1665" y="336" width="9.500" height="547" rx="4.700" fill="#737373"/>
<path d="M1665.500 947L1670 952.500L1674.500 947Z" fill="#666"/>

<!-- tab bar -->
<rect x="0" y="956" width="1680" height="32" fill="#f0f0f0"/>
<path d="M0 956.500H1680" stroke="#d5d5d5"/>
<path d="M34 967L29 972L34 977" fill="none" stroke="#b0b0b0" stroke-width="1.200"/><path d="M62 967L67 972L62 977" fill="none" stroke="#b0b0b0" stroke-width="1.200"/>
<path d="M116 956H169V980Q169 984 165 984H120Q116 984 116 980Z" fill="#fff"/>
<text x="124" y="969" textLength="37" lengthAdjust="spacingAndGlyphs" style="font-size:14.500px;fill:#222;stroke:#222;stroke-width:.3">Hoja2</text>
<rect x="124" y="979" width="37" height="2" fill="#1e6e42"/>
<path d="M173.500 963V981M233.500 963V981" stroke="#c8c8c8"/>
<text x="185" y="972.500" textLength="35" lengthAdjust="spacingAndGlyphs" style="font-size:14.500px;fill:#444">Hoja1</text>
<path d="M276 972H287M281.500 966.500V977.500" stroke="#444"/>
<path d="M1010 966.500v2M1010 971v2M1010 975.500v2" stroke="#333" stroke-width="1.500"/>
<path d="M1038 967V976L1031 971.500Z" fill="#666"/>
<rect x="1044" y="967" width="529" height="9.500" rx="4.700" fill="#737373"/>
<path d="M1650 967V976L1657 971.500Z" fill="#666"/>

<!-- status bar -->
<rect x="0" y="988" width="1680" height="22" fill="#f2f2f2"/>
<text x="11.500" y="1000" textLength="23" lengthAdjust="spacingAndGlyphs" style="font-size:12px;fill:#333">Listo</text>
<path d="M55.500 993H68.500V1005H55.500ZM55.500 996.500H68.500M58 999H61M58 1002H61" fill="none" stroke="#555"/><circle cx="65" cy="1002" r="3.200" fill="#f2f2f2" stroke="#555"/>
<circle cx="93" cy="993" r="2" fill="none" stroke="#555"/><path d="M88 996L93 997.500L98 996M93 998V1002L89 1007M93 1002L97 1007M96 1000L101 1006M101 1000L96 1006" fill="none" stroke="#555"/>
<text x="105" y="1000" textLength="189" lengthAdjust="spacingAndGlyphs" style="font-size:12px;fill:#333">Accesibilidad: es necesario investigar</text>
<rect x="1380" y="988" width="40" height="22" fill="#dedede"/>
<path d="M1393.500 993.500H1406.500V1005.500H1393.500ZM1393.500 997.500H1406.500M1393.500 1001.500H1406.500M1397.500 993.500V1005.500M1402.500 993.500V1005.500" fill="none" stroke="#333"/>
<path d="M1433.500 993.500H1446.500V1005.500H1433.500ZM1436.500 996H1443.500V1003H1436.500ZM1438 998H1442M1438 1000H1442" fill="none" stroke="#333"/>
<path d="M1473.500 993.500H1486.500V1004.500H1473.500ZM1481 993.500V999.500H1473.500" fill="none" stroke="#333"/>
<path d="M1506 999H1513M1519 999H1619M1624 999H1632M1628 995V1003" stroke="#444"/><rect x="1567" y="994" width="5" height="10" fill="#555"/>
<text x="1646" y="1000" textLength="26" lengthAdjust="spacingAndGlyphs" style="font-size:12px;fill:#444">100%</text>

<!-- taskbar -->
<rect x="0" y="1010" width="1680" height="40" fill="#1c1c1c"/>
<rect x="344" y="1010" width="44" height="40" fill="#3a3a3a"/>
<path d="M16 1023L23 1022V1029.500H16ZM24 1021.800L32 1021V1029.500H24ZM16 1030.500H23V1038L16 1037ZM24 1030.500H32V1039L24 1038.200Z" fill="#fff"/>
<circle cx="75" cy="1029" r="6.800" fill="none" stroke="#fff" stroke-width="2.200"/><path d="M70 1034L62.500 1041" stroke="#fff" stroke-width="2.600"/>
<!-- edge -->
<circle cx="123" cy="1031" r="12" fill="#1774c9"/>
<path d="M123 1019a12 12 0 0 1 12 12c0 3-3 5-6 5s-6-1-6-3c0-1 1-1 1-3 0-3-4-5-8-5-3 0-6 1-7 3 2-5 7-9 14-9z" fill="#3ac78f"/>
<path d="M111 1027c3-3 9-3 11 1 0 2-1 3-1 5H111Z" fill="#1aa3dc"/>
<rect x="111" y="1034" width="11" height="8" rx="1" fill="#d9822b"/><rect x="115" y="1032.500" width="3" height="2" fill="none" stroke="#d9822b"/>
<!-- folder -->
<path d="M161 1021H169L171 1023H182V1039H161Z" fill="#e2ab3b"/><rect x="161" y="1025" width="21" height="14" fill="#f8d775"/><path d="M166 1039V1033H177V1039H174V1036H169V1039Z" fill="#4a9ac9"/>
<!-- outlook -->
<rect x="215" y="1019" width="18" height="16" fill="#1f88d6"/><path d="M224 1019H233V1027H224Z" fill="#0f6cbd"/><rect x="209" y="1023.500" width="12" height="12" rx="1" fill="#0f5ea8"/><text x="215" y="1029.500" class="c" style="font-size:10px;font-weight:bold;fill:#fff">O</text><rect x="220" y="1033" width="15" height="11" fill="#f5d9ae"/><path d="M220 1033L227.500 1039L235 1033" fill="none" stroke="#c98a3c"/>
<!-- teams -->
<circle cx="270" cy="1021" r="3.500" fill="#7b83eb"/><circle cx="278" cy="1024" r="2.500" fill="#5059c9"/><rect x="258" y="1024" width="15" height="14" rx="2" fill="#5b5fc7"/><text x="265.500" y="1031" class="c" style="font-size:10px;font-weight:bold;fill:#fff">T</text><circle cx="276" cy="1036" r="8" fill="#13a10e"/><path d="M272 1036L275 1039L280 1033" fill="none" stroke="#fff" stroke-width="1.600"/>
<circle cx="318.500" cy="1029.500" r="12" fill="#c8283f"/><text x="318.500" y="1030" class="c" style="font-size:15px;font-weight:bold;fill:#fff">Mi</text>
<rect x="364" y="1019" width="16" height="21" rx="1" fill="#21a366"/><rect x="372" y="1019" width="8" height="10" fill="#33c481"/><rect x="372" y="1029" width="8" height="11" fill="#185c37"/><rect x="356" y="1023" width="13" height="13" rx="1" fill="#107c41"/><text x="358.500" y="1029.500" style="font-size:10px;font-weight:bold;fill:#fff">x</text>
<rect x="406" y="1019" width="18" height="21" fill="#f3f3f3"/><rect x="406" y="1019" width="18" height="3" fill="#8fc77b"/><circle cx="423" cy="1036" r="5" fill="#c8322f"/><path d="M423 1036L428 1036A5 5 0 0 1 420 1040Z" fill="#2f8f3f"/><path d="M423 1036L419 1033A5 5 0 0 1 423 1031Z" fill="#2e5fa8"/>
<circle cx="465.500" cy="1029.500" r="12" fill="#e33b2e"/><path d="M465.500 1029.500L455.100 1023.500A12 12 0 0 0 459.500 1040Z" fill="#2f9e44"/><path d="M465.500 1029.500L459.500 1040A12 12 0 0 0 477.500 1029.500Z" fill="#f7c52d"/><circle cx="465.500" cy="1029.500" r="5.500" fill="#3f87e8" stroke="#fff" stroke-width="1.500"/>
<g fill="#76b9ed"><rect x="103" y="1048" width="40" height="2"/><rect x="152" y="1048" width="40" height="2"/><rect x="201" y="1048" width="40" height="2"/><rect x="250" y="1048" width="40" height="2"/><rect x="299" y="1048" width="40" height="2"/><rect x="344" y="1048" width="44" height="2"/><rect x="397" y="1048" width="40" height="2"/><rect x="446" y="1048" width="40" height="2"/></g>
<path d="M1455 1034L1461 1028L1467 1034" fill="none" stroke="#fff" stroke-width="1.200"/>
<path d="M1477.500 1025.500H1493V1035H1477.500ZM1485 1035V1038M1481 1038.500H1489" fill="none" stroke="#fff"/><rect x="1477" y="1025" width="5" height="5" fill="#1c1c1c" stroke="#fff"/>
<path d="M1501.500 1028H1505L1509 1024.500V1037.500L1505 1034H1501.500ZM1511 1027Q1513.500 1031 1511 1035M1514 1025Q1517.500 1031 1514 1037" fill="none" stroke="#fff"/>
<text x="1529" y="1030" textLength="18" lengthAdjust="spacingAndGlyphs" style="font-size:12px;fill:#fff">ESP</text>
<text x="1578" y="1020.500" textLength="28" lengthAdjust="spacingAndGlyphs" style="font-size:12.500px;fill:#fff">14:57</text>
<text x="1563" y="1039" textLength="58" lengthAdjust="spacingAndGlyphs" style="font-size:12.500px;fill:#fff">28/11/2025</text>
<path d="M1639 1023H1655V1035H1639Z" fill="#fff"/><path d="M1642 1026.500H1652M1642 1029.500H1652" stroke="#1c1c1c"/>
<circle cx="1654" cy="1037" r="10.500" fill="#5a5a5a" stroke="#8a8a8a"/><text x="1654" y="1037.500" class="c" style="font-size:12px;font-weight:bold;fill:#fff">22</text>

<!-- watermark -->
<path d="M1385 988L1427 957L1463 988L1432 1023L1409 1000" fill="none" stroke="#98ca3f" stroke-width="20" stroke-linejoin="round" opacity=".08"/>
<text x="1482" y="990" textLength="182" lengthAdjust="spacingAndGlyphs" style="font-size:66px;font-weight:bold;fill:#000;opacity:.05">Platzi</text>
</svg>
</body>
</html>
